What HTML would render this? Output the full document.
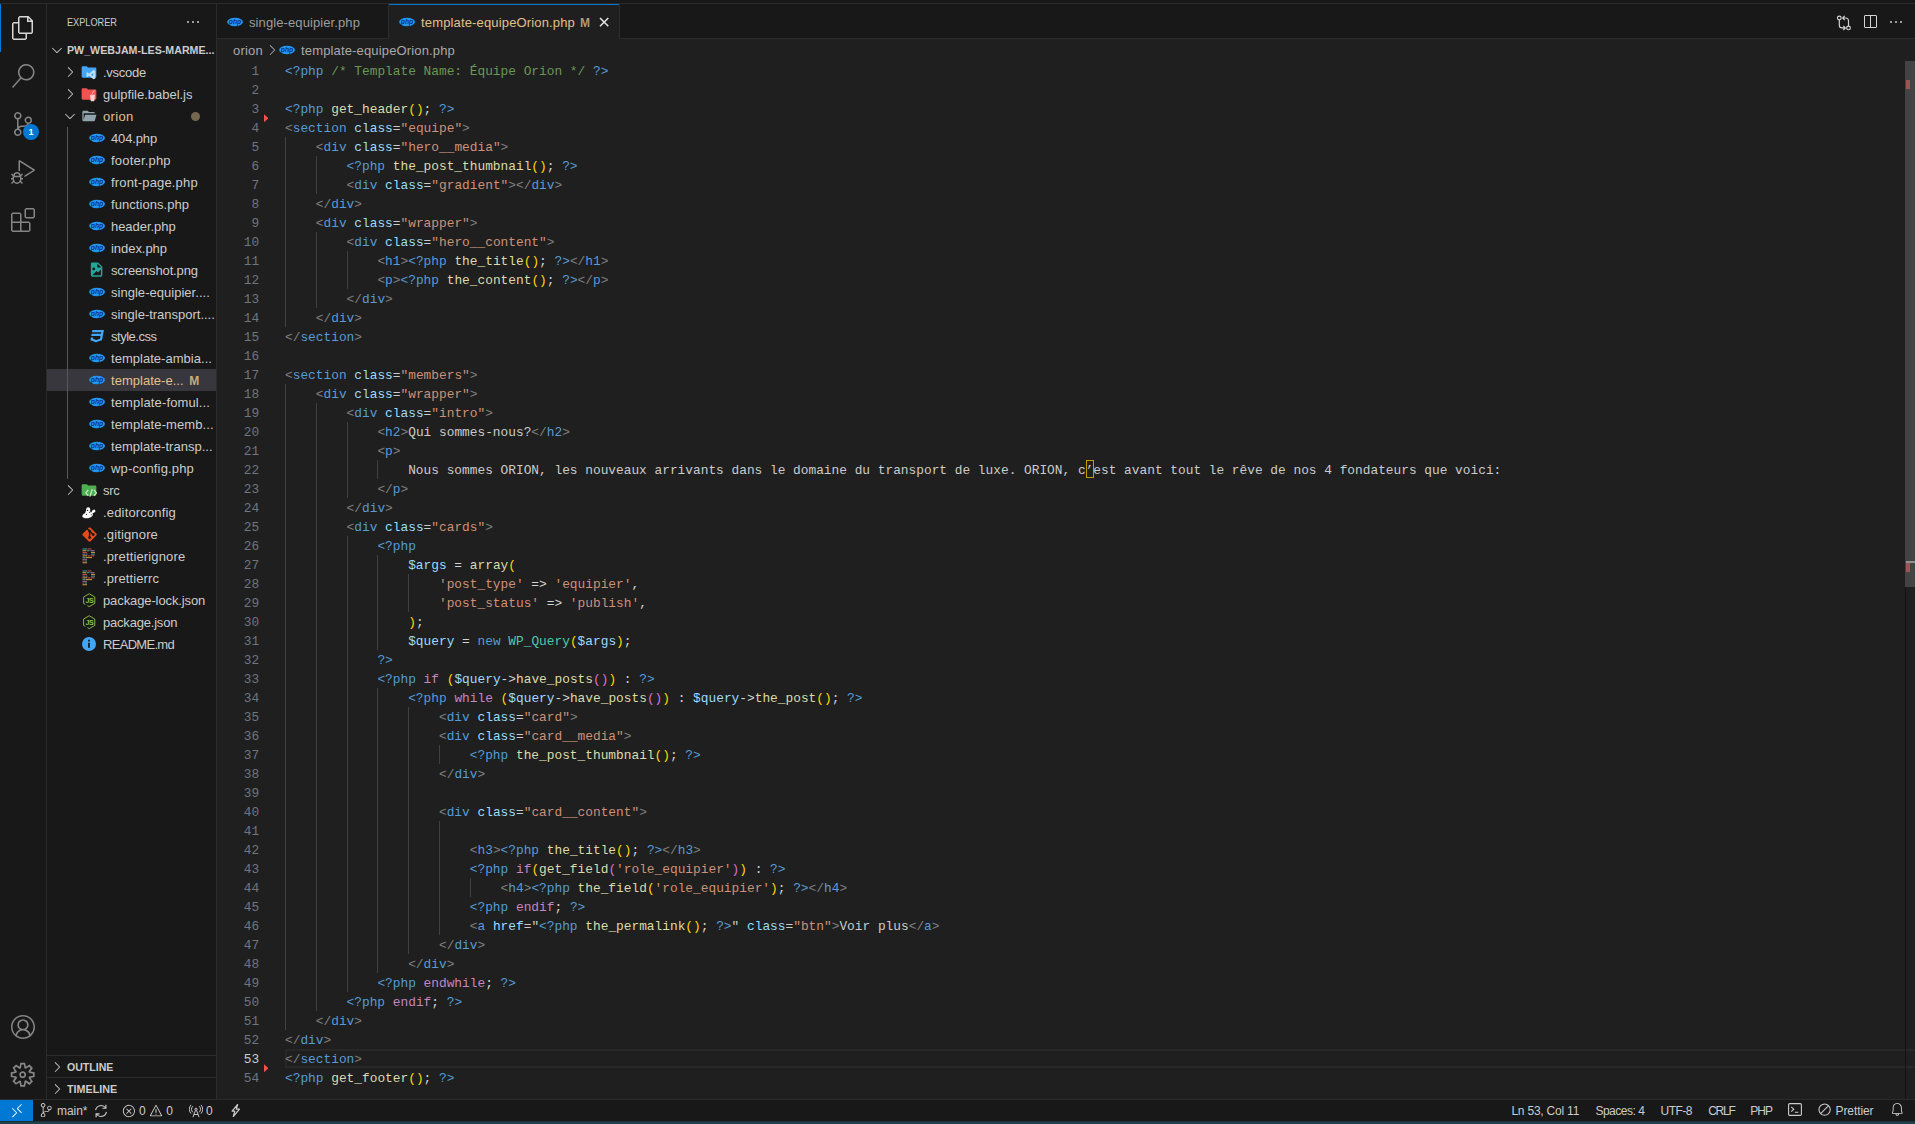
<!DOCTYPE html>
<html lang="fr"><head><meta charset="utf-8"><title>template-equipeOrion.php - Visual Studio Code</title><style>
html,body{margin:0;padding:0;background:#181818;}
body{width:1915px;height:1124px;overflow:hidden;position:relative;font-family:"Liberation Sans", sans-serif;}
#r{position:absolute;left:0;top:0;width:1915px;height:1124px;overflow:hidden;}
#r>div,#r>span,#r>svg{position:absolute;}
.tx{white-space:pre;}
.ln{left:217px;width:42.100px;text-align:right;height:19px;line-height:19px;font-family:"Liberation Mono", monospace;font-size:12.843px;margin-top:1px;}
.cl{height:19px;line-height:19px;white-space:pre;font-family:"Liberation Mono", monospace;font-size:12.843px;margin-top:1px;}
</style></head><body><div id="r">
<div style="left:0px;top:0px;width:1915px;height:1124px;background:#181818;"></div>
<div style="left:0px;top:3px;width:1915px;height:1px;background:#2b2b2b;"></div>
<div style="left:217px;top:39px;width:1698px;height:1060px;background:#1f1f1f;"></div>
<div style="left:46px;top:4px;width:1px;height:1095px;background:#2b2b2b;"></div>
<div style="left:216px;top:4px;width:1px;height:1095px;background:#2b2b2b;"></div>
<div style="left:217px;top:38px;width:1698px;height:1px;background:#2b2b2b;"></div>
<div style="left:388px;top:4px;width:1px;height:34px;background:#2b2b2b;"></div>
<div style="left:389px;top:4px;width:230px;height:35px;background:#1f1f1f;"></div>
<div style="left:389px;top:4px;width:230px;height:1px;background:#0078d4;"></div>
<div style="left:619px;top:4px;width:1px;height:34px;background:#2b2b2b;"></div>
<div style="left:0px;top:1099px;width:1915px;height:1px;background:#2b2b2b;"></div>
<div style="left:0px;top:1100px;width:33px;height:21px;background:#0078d4;"></div>
<div style="left:0px;top:1121px;width:1915px;height:3px;background:#1e414c;"></div>
<div style="left:0px;top:1121px;width:1915px;height:1px;background:#1b3038;"></div>
<div style="left:0px;top:4px;width:1px;height:48px;background:#0078d4;"></div>
<svg style="left:11px;top:16px;" width="24" height="24" viewBox="0 0 24 24"><path fill="#d7d7d7" fill-rule="evenodd" clip-rule="evenodd" d="M17.5 0h-9L7 1.5V6H2.5L1 7.5v15.07L2.5 24h12.07L16 22.57V18h4.7l1.3-1.43V4.5L17.5 0zm0 2.12l2.38 2.38H17.5V2.12zm-3 20.38h-12v-15H7v9.07L8.5 18h6v4.5zm6-6h-12v-15H16V6h4.5v10.5z"/></svg>
<svg style="left:11px;top:64px;" width="24" height="24" viewBox="0 0 24 24"><path fill="#868686" fill-rule="evenodd" clip-rule="evenodd" d="M15.25 0a8.25 8.25 0 0 0-6.18 13.72L1 22.88l1.12 1 8.05-9.12A8.251 8.251 0 1 0 15.25.01V0zm0 15a6.75 6.75 0 1 1 0-13.5 6.75 6.75 0 0 1 0 13.5z"/></svg>
<svg style="left:11px;top:112px;" width="24" height="24" viewBox="0 0 24 24"><path fill="#868686" fill-rule="evenodd" clip-rule="evenodd" d="M21.007 8.222A3.738 3.738 0 0 0 15.045 5.2a3.737 3.737 0 0 0 1.156 6.583 2.988 2.988 0 0 1-2.668 1.67h-2.99a4.456 4.456 0 0 0-2.989 1.165V7.4a3.737 3.737 0 1 0-1.494 0v9.117a3.776 3.776 0 1 0 1.816.099 2.99 2.99 0 0 1 2.668-1.667h2.99a4.484 4.484 0 0 0 4.223-3.039 3.736 3.736 0 0 0 3.25-3.687zM4.565 3.738a2.242 2.242 0 1 1 4.484 0 2.242 2.242 0 0 1-4.484 0zm4.484 16.441a2.242 2.242 0 1 1-4.484 0 2.242 2.242 0 0 1 4.484 0zm8.221-9.715a2.242 2.242 0 1 1 0-4.485 2.242 2.242 0 0 1 0 4.485z"/></svg>
<svg style="left:11px;top:160px;" width="24" height="24" viewBox="0 0 24 24"><path fill="#868686" fill-rule="evenodd" clip-rule="evenodd" d="M10.94 13.5l-1.32 1.32a3.73 3.73 0 0 0-7.24 0L1.06 13.5 0 14.56l1.72 1.72-.22.22V18H0v1.5h1.5v.08c.077.489.214.966.41 1.42L0 22.94 1.06 24l1.65-1.65A4.308 4.308 0 0 0 6 24a4.31 4.31 0 0 0 3.29-1.65L10.94 24 12 22.94 10.09 21c.198-.464.336-.951.41-1.45v-.1H12V18h-1.5v-1.5l-.22-.22L12 14.56l-1.06-1.06zM6 13.5a2.25 2.25 0 0 1 2.25 2.25h-4.5A2.25 2.25 0 0 1 6 13.5zm3 6a3.33 3.33 0 0 1-3 3 3.33 3.33 0 0 1-3-3v-2.25h6v2.25zm14.76-9.9v1.26L13.5 17.37V15.6l8.5-5.37L9 2v9.46a5.07 5.07 0 0 0-1.5-.72V.63L8.64 0l15.12 9.6z"/></svg>
<svg style="left:11px;top:208px;" width="24" height="24" viewBox="0 0 24 24"><path fill="#868686" fill-rule="evenodd" clip-rule="evenodd" d="M13.5 1.5L15 0h7.5L24 1.5V9l-1.5 1.5H15L13.5 9V1.5zm1.5 0V9h7.5V1.5H15zM0 15V6l1.5-1.5H9L10.5 6v7.5H18l1.5 1.5v7.5L18 24H1.5L0 22.5V15zm9-1.5V6H1.5v7.5H9zM9 15H1.5v7.5H9V15zm1.5 7.5H18V15h-7.5v7.5z"/></svg>
<div style="left:23px;top:124px;width:16px;height:16px;border-radius:8px;background:#0078d4"></div>
<span id="t0" class="tx" style="left:28.5px;top:124.0px;font-size:9px;line-height:16px;color:#ffffff;font-weight:700;">1</span>
<svg style="left:11px;top:1015px;" width="24" height="24" viewBox="0 0 16 16"><path fill="#868686" fill-rule="evenodd" clip-rule="evenodd" d="M16 7.992C16 3.58 12.416 0 8 0S0 3.58 0 7.992c0 2.43 1.104 4.62 2.832 6.09.016.016.032.016.032.032.144.112.288.224.448.336.08.048.144.111.224.175A7.98 7.98 0 0 0 8.016 16a7.98 7.98 0 0 0 4.48-1.375c.08-.048.144-.111.224-.16.144-.111.304-.223.448-.335.016-.016.032-.016.032-.032 1.696-1.487 2.8-3.676 2.8-6.106zm-8 7.001c-1.504 0-2.88-.48-4.016-1.279.016-.128.048-.255.08-.383a4.17 4.17 0 0 1 .416-.991c.176-.304.384-.576.64-.816.24-.24.528-.463.816-.639.304-.176.624-.304.976-.4A4.15 4.15 0 0 1 8 10.342a4.185 4.185 0 0 1 2.928 1.166c.368.368.656.8.864 1.295.112.288.192.592.24.911A7.03 7.03 0 0 1 8 14.993zm-2.448-7.4a2.49 2.49 0 0 1-.208-1.024c0-.351.064-.703.208-1.023.144-.32.336-.607.576-.847.24-.24.528-.431.848-.575.32-.144.672-.208 1.024-.208.368 0 .704.064 1.024.208.32.144.608.336.848.575.24.24.432.528.576.847.144.32.208.672.208 1.023 0 .368-.064.704-.208 1.023a2.84 2.84 0 0 1-.576.848 2.84 2.84 0 0 1-.848.575 2.715 2.715 0 0 1-2.064 0 2.84 2.84 0 0 1-.848-.575 2.526 2.526 0 0 1-.56-.848zm7.424 5.306c0-.032-.016-.048-.016-.08a5.22 5.22 0 0 0-.688-1.406 4.883 4.883 0 0 0-1.088-1.135 5.207 5.207 0 0 0-1.04-.608 2.82 2.82 0 0 0 .464-.383 4.2 4.2 0 0 0 .624-.784 3.624 3.624 0 0 0 .528-1.934 3.71 3.71 0 0 0-.288-1.47 3.799 3.799 0 0 0-.816-1.199 3.845 3.845 0 0 0-1.2-.8 3.72 3.72 0 0 0-1.472-.287 3.72 3.72 0 0 0-1.472.288 3.631 3.631 0 0 0-1.2.815 3.84 3.84 0 0 0-.8 1.199 3.71 3.71 0 0 0-.288 1.47c0 .352.048.688.144 1.007.096.336.224.64.4.927.16.288.384.544.624.784.144.144.304.271.48.383a5.12 5.12 0 0 0-1.04.624c-.416.32-.784.703-1.088 1.119a4.999 4.999 0 0 0-.688 1.406c-.16.032-.16.064-.16.08C1.776 11.636.992 9.91.992 7.992.992 4.14 4.144.991 8 .991s7.008 3.149 7.008 7.001a6.96 6.96 0 0 1-2.032 4.907z"/></svg>
<svg style="left:9.3px;top:1061.3px;" width="27.4" height="27.4" viewBox="0 0 16 16"><path fill="#868686" fill-rule="evenodd" clip-rule="evenodd" d="M9.1 4.4L8.6 2H7.4l-.5 2.4-.7.3-2-1.3-.9.8 1.3 2-.2.7-2.4.5v1.2l2.4.5.3.8-1.3 2 .8.8 2-1.3.8.3.4 2.3h1.2l.5-2.4.8-.3 2 1.3.8-.8-1.3-2 .3-.8 2.3-.4V7.4l-2.4-.5-.3-.8 1.3-2-.8-.8-2 1.3-.7-.2zM9.4 1l.5 2.4L12 2.1l2 2-1.4 2.1 2.4.4v2.8l-2.4.5L14 12l-2 2-2.1-1.4-.5 2.4H6.6l-.5-2.4L4 13.9l-2-2 1.4-2.1L1 9.4V6.6l2.4-.5L2.1 4l2-2 2.1 1.4.4-2.4h2.8zm.6 7c0 1.1-.9 2-2 2s-2-.9-2-2 .9-2 2-2 2 .9 2 2zM8 9c.6 0 1-.4 1-1s-.4-1-1-1-1 .4-1 1 .4 1 1 1z"/></svg>
<span id="t1" class="tx" style="left:67px;top:11.0px;font-size:11px;line-height:22px;color:#cccccc;font-weight:400;transform:scaleX(0.8344);transform-origin:0 50%;">EXPLORER</span>
<svg style="left:185px;top:14px;" width="16" height="16" viewBox="0 0 16 16"><path fill="#cccccc" fill-rule="evenodd" clip-rule="evenodd" d="M4 8a1 1 0 1 1-2 0 1 1 0 0 1 2 0zm5 0a1 1 0 1 1-2 0 1 1 0 0 1 2 0zm5 0a1 1 0 1 1-2 0 1 1 0 0 1 2 0z"/></svg>
<svg style="left:49px;top:42px;" width="16" height="16" viewBox="0 0 16 16"><path fill="#cccccc" fill-rule="evenodd" clip-rule="evenodd" d="M7.976 10.072l4.357-4.357.62.618L8.284 11h-.618L3 6.333l.619-.618 4.357 4.357z"/></svg>
<span id="t2" class="tx" style="left:67px;top:39.0px;font-size:11px;line-height:22px;color:#cccccc;font-weight:700;transform:scaleX(0.9693);transform-origin:0 50%;">PW_WEBJAM-LES-MARME...</span>
<div style="left:47px;top:369px;width:169px;height:22px;background:#37373d;"></div>
<div style="left:67px;top:127px;width:1px;height:352px;background:#585858;"></div>
<svg style="left:62px;top:64px;" width="16" height="16" viewBox="0 0 16 16"><path fill="#cccccc" fill-rule="evenodd" clip-rule="evenodd" d="M10.072 8.024L5.715 3.667l.618-.62L11 7.716v.618L6.333 13l-.618-.619 4.357-4.357z"/></svg>
<svg style="left:81px;top:64px;" width="16" height="16" viewBox="0 0 24 24"><path fill="#42a5f5" d="M10.200 4.700l-1-.8a1.600 1.600 0 0 0-1-.4H2.600A1.600 1.600 0 0 0 1 5.100v13.800a1.600 1.600 0 0 0 1.600 1.600h18.800a1.600 1.600 0 0 0 1.600-1.600V6.700a1.600 1.600 0 0 0-1.600-1.600h-10.200a1.600 1.600 0 0 1-1-.4z"/><path fill="#bbdefb" d="M21.5 10.2v11.6l-3 1.2-6.3-5.6-2.7 2.1-1.2-.7v-5.600l1.2-.7 2.700 2.100 6.300-5.600 3 1.200zm-3.200 3.300l-3.600 2.500 3.600 2.500v-5z"/></svg>
<span id="t3" class="tx" style="left:103px;top:62.0px;font-size:13px;line-height:22px;color:#cccccc;font-weight:400;letter-spacing:-0.259px;">.vscode</span>
<svg style="left:62px;top:86px;" width="16" height="16" viewBox="0 0 16 16"><path fill="#cccccc" fill-rule="evenodd" clip-rule="evenodd" d="M10.072 8.024L5.715 3.667l.618-.62L11 7.716v.618L6.333 13l-.618-.619 4.357-4.357z"/></svg>
<svg style="left:81px;top:86px;" width="16" height="16" viewBox="0 0 24 24"><path fill="#ef5350" d="M10.200 4.700l-1-.8a1.600 1.600 0 0 0-1-.4H2.600A1.600 1.600 0 0 0 1 5.100v13.800a1.600 1.600 0 0 0 1.600 1.600h18.800a1.600 1.600 0 0 0 1.600-1.600V6.700a1.600 1.600 0 0 0-1.600-1.600h-10.200a1.600 1.600 0 0 1-1-.4z"/><path fill="#ffcdd2" d="M13.500 13h7.500l-.8 8.500c-.1.900-.8 1.500-1.700 1.500h-2.500c-.900 0-1.600-.6-1.700-1.500L13.500 13zm3.200-1l1.300-4.500 2.500-.8.300 1-2 .6-1 3.700h-1.100z"/></svg>
<span id="t4" class="tx" style="left:103px;top:84.0px;font-size:13px;line-height:22px;color:#cccccc;font-weight:400;letter-spacing:-0.007px;">gulpfile.babel.js</span>
<svg style="left:62px;top:108px;" width="16" height="16" viewBox="0 0 16 16"><path fill="#cccccc" fill-rule="evenodd" clip-rule="evenodd" d="M7.976 10.072l4.357-4.357.62.618L8.284 11h-.618L3 6.333l.619-.618 4.357 4.357z"/></svg>
<svg style="left:81px;top:108px;" width="16" height="16" viewBox="0 0 24 24"><path fill="#90a4ae" d="M19 20H4a2 2 0 0 1-2-2V6c0-1.11.89-2 2-2h6l2 2h7a2 2 0 0 1 2 2H4v10l2.14-8h17.07l-2.28 8.5c-.23.87-1.01 1.5-1.93 1.5z"/></svg>
<span id="t5" class="tx" style="left:103px;top:106.0px;font-size:13px;line-height:22px;color:#e2c08d;font-weight:400;letter-spacing:0.316px;">orion</span>
<div style="left:190.5px;top:111.5px;width:9px;height:9px;border-radius:5px;background:#75664f"></div>
<svg style="left:88.6px;top:130px;" width="17" height="16" viewBox="0 0 17 16"><ellipse cx="8.05" cy="8" rx="7.9" ry="4.2" fill="#2196f3"/><text x="8" y="9.700" text-anchor="middle" font-family="Liberation Sans, sans-serif" font-size="6.8" font-weight="700" font-style="italic" fill="#04101c" fill-opacity=".72">php</text></svg>
<span id="t6" class="tx" style="left:111px;top:128.0px;font-size:13px;line-height:22px;color:#cccccc;font-weight:400;letter-spacing:-0.143px;">404.php</span>
<svg style="left:88.6px;top:152px;" width="17" height="16" viewBox="0 0 17 16"><ellipse cx="8.05" cy="8" rx="7.9" ry="4.2" fill="#2196f3"/><text x="8" y="9.700" text-anchor="middle" font-family="Liberation Sans, sans-serif" font-size="6.8" font-weight="700" font-style="italic" fill="#04101c" fill-opacity=".72">php</text></svg>
<span id="t7" class="tx" style="left:111px;top:150.0px;font-size:13px;line-height:22px;color:#cccccc;font-weight:400;letter-spacing:0.196px;">footer.php</span>
<svg style="left:88.6px;top:174px;" width="17" height="16" viewBox="0 0 17 16"><ellipse cx="8.05" cy="8" rx="7.9" ry="4.2" fill="#2196f3"/><text x="8" y="9.700" text-anchor="middle" font-family="Liberation Sans, sans-serif" font-size="6.8" font-weight="700" font-style="italic" fill="#04101c" fill-opacity=".72">php</text></svg>
<span id="t8" class="tx" style="left:111px;top:172.0px;font-size:13px;line-height:22px;color:#cccccc;font-weight:400;letter-spacing:0.159px;">front-page.php</span>
<svg style="left:88.6px;top:196px;" width="17" height="16" viewBox="0 0 17 16"><ellipse cx="8.05" cy="8" rx="7.9" ry="4.2" fill="#2196f3"/><text x="8" y="9.700" text-anchor="middle" font-family="Liberation Sans, sans-serif" font-size="6.8" font-weight="700" font-style="italic" fill="#04101c" fill-opacity=".72">php</text></svg>
<span id="t9" class="tx" style="left:111px;top:194.0px;font-size:13px;line-height:22px;color:#cccccc;font-weight:400;letter-spacing:0.051px;">functions.php</span>
<svg style="left:88.6px;top:218px;" width="17" height="16" viewBox="0 0 17 16"><ellipse cx="8.05" cy="8" rx="7.9" ry="4.2" fill="#2196f3"/><text x="8" y="9.700" text-anchor="middle" font-family="Liberation Sans, sans-serif" font-size="6.8" font-weight="700" font-style="italic" fill="#04101c" fill-opacity=".72">php</text></svg>
<span id="t10" class="tx" style="left:111px;top:216.0px;font-size:13px;line-height:22px;color:#cccccc;font-weight:400;letter-spacing:-0.046px;">header.php</span>
<svg style="left:88.6px;top:240px;" width="17" height="16" viewBox="0 0 17 16"><ellipse cx="8.05" cy="8" rx="7.9" ry="4.2" fill="#2196f3"/><text x="8" y="9.700" text-anchor="middle" font-family="Liberation Sans, sans-serif" font-size="6.8" font-weight="700" font-style="italic" fill="#04101c" fill-opacity=".72">php</text></svg>
<span id="t11" class="tx" style="left:111px;top:238.0px;font-size:13px;line-height:22px;color:#cccccc;font-weight:400;letter-spacing:-0.043px;">index.php</span>
<svg style="left:88px;top:261.1px;" width="17.2" height="17.2" viewBox="0 0 24 24"><path fill="#26a69a" fill-rule="evenodd" d="M13 9h5.500L13 3.500V9M6 2h8l6 6v12a2 2 0 0 1-2 2H6a2 2 0 0 1-2-2V4c0-1.110.890-2 2-2m0 18h12v-8l-4 4-2-2-6 6M8 9a2 2 0 0 0-2 2 2 2 0 0 0 2 2 2 2 0 0 0 2-2 2 2 0 0 0-2-2z"/></svg>
<span id="t12" class="tx" style="left:111px;top:260.0px;font-size:13px;line-height:22px;color:#cccccc;font-weight:400;letter-spacing:-0.150px;">screenshot.png</span>
<svg style="left:88.6px;top:284px;" width="17" height="16" viewBox="0 0 17 16"><ellipse cx="8.05" cy="8" rx="7.9" ry="4.2" fill="#2196f3"/><text x="8" y="9.700" text-anchor="middle" font-family="Liberation Sans, sans-serif" font-size="6.8" font-weight="700" font-style="italic" fill="#04101c" fill-opacity=".72">php</text></svg>
<span id="t13" class="tx" style="left:111px;top:282.0px;font-size:13px;line-height:22px;color:#cccccc;font-weight:400;letter-spacing:0.027px;">single-equipier....</span>
<svg style="left:88.6px;top:306px;" width="17" height="16" viewBox="0 0 17 16"><ellipse cx="8.05" cy="8" rx="7.9" ry="4.2" fill="#2196f3"/><text x="8" y="9.700" text-anchor="middle" font-family="Liberation Sans, sans-serif" font-size="6.8" font-weight="700" font-style="italic" fill="#04101c" fill-opacity=".72">php</text></svg>
<span id="t14" class="tx" style="left:111px;top:304.0px;font-size:13px;line-height:22px;color:#cccccc;font-weight:400;letter-spacing:-0.013px;">single-transport....</span>
<svg style="left:89.2px;top:328px;" width="16.4" height="16.4" viewBox="0 0 24 24"><path fill="#42a5f5" d="M5 3l-.650 3.340h13.590L17.500 8.500H3.920l-.660 3.330h13.590l-.760 3.810-5.480 1.810-4.750-1.810.330-1.640H2.850l-.790 4 7.850 3 9.050-3 1.200-6.030.240-1.210L21.940 3H5z"/></svg>
<span id="t15" class="tx" style="left:111px;top:326.0px;font-size:13px;line-height:22px;color:#cccccc;font-weight:400;letter-spacing:-0.473px;">style.css</span>
<svg style="left:88.6px;top:350px;" width="17" height="16" viewBox="0 0 17 16"><ellipse cx="8.05" cy="8" rx="7.9" ry="4.2" fill="#2196f3"/><text x="8" y="9.700" text-anchor="middle" font-family="Liberation Sans, sans-serif" font-size="6.8" font-weight="700" font-style="italic" fill="#04101c" fill-opacity=".72">php</text></svg>
<span id="t16" class="tx" style="left:111px;top:348.0px;font-size:13px;line-height:22px;color:#cccccc;font-weight:400;letter-spacing:0.033px;">template-ambia...</span>
<svg style="left:88.6px;top:372px;" width="17" height="16" viewBox="0 0 17 16"><ellipse cx="8.05" cy="8" rx="7.9" ry="4.2" fill="#2196f3"/><text x="8" y="9.700" text-anchor="middle" font-family="Liberation Sans, sans-serif" font-size="6.8" font-weight="700" font-style="italic" fill="#04101c" fill-opacity=".72">php</text></svg>
<span id="t17" class="tx" style="left:111px;top:370.0px;font-size:13px;line-height:22px;color:#e2c08d;font-weight:400;letter-spacing:0.026px;">template-e...</span>
<span id="t18" class="tx" style="left:189.3px;top:370.0px;font-size:12px;line-height:22px;color:#c8ab7e;font-weight:700;letter-spacing:0.690px;">M</span>
<svg style="left:88.6px;top:394px;" width="17" height="16" viewBox="0 0 17 16"><ellipse cx="8.05" cy="8" rx="7.9" ry="4.2" fill="#2196f3"/><text x="8" y="9.700" text-anchor="middle" font-family="Liberation Sans, sans-serif" font-size="6.8" font-weight="700" font-style="italic" fill="#04101c" fill-opacity=".72">php</text></svg>
<span id="t19" class="tx" style="left:111px;top:392.0px;font-size:13px;line-height:22px;color:#cccccc;font-weight:400;letter-spacing:0.134px;">template-fomul...</span>
<svg style="left:88.6px;top:416px;" width="17" height="16" viewBox="0 0 17 16"><ellipse cx="8.05" cy="8" rx="7.9" ry="4.2" fill="#2196f3"/><text x="8" y="9.700" text-anchor="middle" font-family="Liberation Sans, sans-serif" font-size="6.8" font-weight="700" font-style="italic" fill="#04101c" fill-opacity=".72">php</text></svg>
<span id="t20" class="tx" style="left:111px;top:414.0px;font-size:13px;line-height:22px;color:#cccccc;font-weight:400;letter-spacing:0.097px;">template-memb...</span>
<svg style="left:88.6px;top:438px;" width="17" height="16" viewBox="0 0 17 16"><ellipse cx="8.05" cy="8" rx="7.9" ry="4.2" fill="#2196f3"/><text x="8" y="9.700" text-anchor="middle" font-family="Liberation Sans, sans-serif" font-size="6.8" font-weight="700" font-style="italic" fill="#04101c" fill-opacity=".72">php</text></svg>
<span id="t21" class="tx" style="left:111px;top:436.0px;font-size:13px;line-height:22px;color:#cccccc;font-weight:400;letter-spacing:0.024px;">template-transp...</span>
<svg style="left:88.6px;top:460px;" width="17" height="16" viewBox="0 0 17 16"><ellipse cx="8.05" cy="8" rx="7.9" ry="4.2" fill="#2196f3"/><text x="8" y="9.700" text-anchor="middle" font-family="Liberation Sans, sans-serif" font-size="6.8" font-weight="700" font-style="italic" fill="#04101c" fill-opacity=".72">php</text></svg>
<span id="t22" class="tx" style="left:111px;top:458.0px;font-size:13px;line-height:22px;color:#cccccc;font-weight:400;letter-spacing:0.158px;">wp-config.php</span>
<svg style="left:62px;top:482px;" width="16" height="16" viewBox="0 0 16 16"><path fill="#cccccc" fill-rule="evenodd" clip-rule="evenodd" d="M10.072 8.024L5.715 3.667l.618-.62L11 7.716v.618L6.333 13l-.618-.619 4.357-4.357z"/></svg>
<svg style="left:81px;top:482px;" width="16" height="16" viewBox="0 0 24 24"><path fill="#4caf50" d="M10.200 4.700l-1-.8a1.600 1.600 0 0 0-1-.4H2.600A1.600 1.600 0 0 0 1 5.100v13.800a1.600 1.600 0 0 0 1.600 1.600h18.800a1.600 1.600 0 0 0 1.600-1.600V6.700a1.600 1.600 0 0 0-1.600-1.600h-10.200a1.600 1.600 0 0 1-1-.4z"/><path fill="none" stroke="#c8e6c9" stroke-width="1.900" d="M11 11.800l-3.800 4.400 3.800 4.400M19.400 11.800l3.800 4.400-3.800 4.400M17 10.600l-3.600 11.400"/></svg>
<span id="t23" class="tx" style="left:103px;top:480.0px;font-size:13px;line-height:22px;color:#cccccc;font-weight:400;letter-spacing:-0.344px;">src</span>
<svg style="left:81px;top:504px;" width="16" height="16" viewBox="0 0 16 16"><g fill="#fafafa"><ellipse cx="6.600" cy="11.300" rx="5.400" ry="2.900" transform="rotate(-12 6.600 11.300)"/><circle cx="7.200" cy="5.300" r="2"/><path d="M5.400 5.500l-1.600 4.500 5.800 1 -.600-5.600z"/><ellipse cx="12.600" cy="7.200" rx="1.900" ry="1.400" transform="rotate(-25 12.600 7.200)"/><path d="M9 9.600l3-2.800 1 1.400-3 2.600z"/></g><g fill="#181818"><circle cx="6.600" cy="6.400" r=".6"/><circle cx="8.400" cy="8.300" r=".55"/><circle cx="5.400" cy="10.400" r=".55"/><circle cx="10.300" cy="10.800" r=".5"/></g></svg>
<span id="t24" class="tx" style="left:103px;top:502.0px;font-size:13px;line-height:22px;color:#cccccc;font-weight:400;letter-spacing:0.167px;">.editorconfig</span>
<svg style="left:80.8px;top:525.7px;" width="17.2" height="17.2" viewBox="0 0 24 24"><path fill="#e64a19" d="M2.600 10.590L8.380 4.800l1.690 1.700c-.240.850.150 1.780.930 2.230v5.540c-.600.340-1 .990-1 1.730a2 2 0 0 0 2 2 2 2 0 0 0 2-2c0-.740-.400-1.390-1-1.730V9.410l2.070 2.090c-.070.150-.070.320-.070.500a2 2 0 0 0 2 2 2 2 0 0 0 2-2 2 2 0 0 0-2-2c-.180 0-.350 0-.500.070L13.930 7.500a1.980 1.980 0 0 0-1.150-2.340c-.430-.160-.880-.200-1.280-.090L9.800 3.380l.790-.780c.780-.790 2.040-.790 2.820 0l7.990 7.990c.790.780.790 2.040 0 2.820l-7.990 7.990c-.780.790-2.040.790-2.820 0L2.600 13.410c-.790-.780-.790-2.040 0-2.820z"/></svg>
<span id="t25" class="tx" style="left:103px;top:524.0px;font-size:13px;line-height:22px;color:#cccccc;font-weight:400;letter-spacing:0.152px;">.gitignore</span>
<svg style="left:81px;top:548px;" width="16" height="16" viewBox="0 0 16 16"><rect x="1.5" y="0.45" width="5" height="1.050" fill="#56b3b4" fill-opacity=".8"/><rect x="7" y="0.45" width="3.5" height="1.050" fill="#ea5e5e" fill-opacity=".8"/><rect x="1.5" y="2.17" width="3.5" height="1.050" fill="#f7ba3e" fill-opacity=".8"/><rect x="5.5" y="2.17" width="3" height="1.050" fill="#56b3b4" fill-opacity=".8"/><rect x="9.5" y="2.17" width="4" height="1.050" fill="#bf85bf" fill-opacity=".8"/><rect x="1.5" y="3.89" width="4.5" height="1.050" fill="#ea5e5e" fill-opacity=".8"/><rect x="10" y="3.89" width="4" height="1.050" fill="#f7ba3e" fill-opacity=".8"/><rect x="1.5" y="5.61" width="3" height="1.050" fill="#bf85bf" fill-opacity=".8"/><rect x="5" y="5.61" width="1.5" height="1.050" fill="#56b3b4" fill-opacity=".8"/><rect x="10" y="5.61" width="4" height="1.050" fill="#56b3b4" fill-opacity=".8"/><rect x="1.5" y="7.33" width="4.5" height="1.050" fill="#f7ba3e" fill-opacity=".8"/><rect x="6.5" y="7.33" width="3" height="1.050" fill="#ea5e5e" fill-opacity=".8"/><rect x="10" y="7.33" width="3.5" height="1.050" fill="#ea5e5e" fill-opacity=".8"/><rect x="1.5" y="9.05" width="3" height="1.050" fill="#56b3b4" fill-opacity=".8"/><rect x="5" y="9.05" width="6" height="1.050" fill="#f7ba3e" fill-opacity=".8"/><rect x="1.5" y="10.77" width="4.5" height="1.050" fill="#bf85bf" fill-opacity=".8"/><rect x="1.5" y="12.49" width="2" height="1.050" fill="#ea5e5e" fill-opacity=".8"/><rect x="4" y="12.49" width="2" height="1.050" fill="#56b3b4" fill-opacity=".8"/><rect x="1.5" y="14.21" width="4.5" height="1.050" fill="#f7ba3e" fill-opacity=".8"/></svg>
<span id="t26" class="tx" style="left:103px;top:546.0px;font-size:13px;line-height:22px;color:#cccccc;font-weight:400;letter-spacing:0.139px;">.prettierignore</span>
<svg style="left:81px;top:570px;" width="16" height="16" viewBox="0 0 16 16"><rect x="1.5" y="0.45" width="5" height="1.050" fill="#56b3b4" fill-opacity=".8"/><rect x="7" y="0.45" width="3.5" height="1.050" fill="#ea5e5e" fill-opacity=".8"/><rect x="1.5" y="2.17" width="3.5" height="1.050" fill="#f7ba3e" fill-opacity=".8"/><rect x="5.5" y="2.17" width="3" height="1.050" fill="#56b3b4" fill-opacity=".8"/><rect x="9.5" y="2.17" width="4" height="1.050" fill="#bf85bf" fill-opacity=".8"/><rect x="1.5" y="3.89" width="4.5" height="1.050" fill="#ea5e5e" fill-opacity=".8"/><rect x="10" y="3.89" width="4" height="1.050" fill="#f7ba3e" fill-opacity=".8"/><rect x="1.5" y="5.61" width="3" height="1.050" fill="#bf85bf" fill-opacity=".8"/><rect x="5" y="5.61" width="1.5" height="1.050" fill="#56b3b4" fill-opacity=".8"/><rect x="10" y="5.61" width="4" height="1.050" fill="#56b3b4" fill-opacity=".8"/><rect x="1.5" y="7.33" width="4.5" height="1.050" fill="#f7ba3e" fill-opacity=".8"/><rect x="6.5" y="7.33" width="3" height="1.050" fill="#ea5e5e" fill-opacity=".8"/><rect x="10" y="7.33" width="3.5" height="1.050" fill="#ea5e5e" fill-opacity=".8"/><rect x="1.5" y="9.05" width="3" height="1.050" fill="#56b3b4" fill-opacity=".8"/><rect x="5" y="9.05" width="6" height="1.050" fill="#f7ba3e" fill-opacity=".8"/><rect x="1.5" y="10.77" width="4.5" height="1.050" fill="#bf85bf" fill-opacity=".8"/><rect x="1.5" y="12.49" width="2" height="1.050" fill="#ea5e5e" fill-opacity=".8"/><rect x="4" y="12.49" width="2" height="1.050" fill="#56b3b4" fill-opacity=".8"/><rect x="1.5" y="14.21" width="4.5" height="1.050" fill="#f7ba3e" fill-opacity=".8"/></svg>
<span id="t27" class="tx" style="left:103px;top:568.0px;font-size:13px;line-height:22px;color:#cccccc;font-weight:400;letter-spacing:0.099px;">.prettierrc</span>
<svg style="left:80.6px;top:591.8px;" width="16.4" height="16.4" viewBox="0 0 24 24"><path fill="none" stroke="#8bc34a" stroke-width="1.350" stroke-linejoin="round" d="M12 2.600l8.200 4.700v9.400L12 21.400l-2.600-1.500M12 2.600L3.800 7.300v9.400l2.600 1.500"/><text x="12.300" y="16.200" text-anchor="middle" font-family="Liberation Sans, sans-serif" font-size="10.500" font-weight="700" fill="#8bc34a" letter-spacing="-.6">JS</text></svg>
<span id="t28" class="tx" style="left:103px;top:590.0px;font-size:13px;line-height:22px;color:#cccccc;font-weight:400;letter-spacing:-0.109px;">package-lock.json</span>
<svg style="left:80.6px;top:613.8px;" width="16.4" height="16.4" viewBox="0 0 24 24"><path fill="none" stroke="#8bc34a" stroke-width="1.350" stroke-linejoin="round" d="M12 2.600l8.200 4.700v9.400L12 21.400l-2.600-1.500M12 2.600L3.800 7.300v9.400l2.600 1.500"/><text x="12.300" y="16.200" text-anchor="middle" font-family="Liberation Sans, sans-serif" font-size="10.500" font-weight="700" fill="#8bc34a" letter-spacing="-.6">JS</text></svg>
<span id="t29" class="tx" style="left:103px;top:612.0px;font-size:13px;line-height:22px;color:#cccccc;font-weight:400;letter-spacing:-0.201px;">package.json</span>
<svg style="left:81px;top:636px;" width="16" height="16" viewBox="0 0 16 16"><circle cx="8" cy="8" r="7" fill="#42a5f5"/><rect x="7.100" y="6.800" width="1.800" height="5" fill="#181818"/><rect x="7.100" y="3.700" width="1.800" height="1.800" fill="#181818"/></svg>
<span id="t30" class="tx" style="left:103px;top:634.0px;font-size:13px;line-height:22px;color:#cccccc;font-weight:400;letter-spacing:-0.700px;">README.md</span>
<div style="left:47px;top:1055px;width:169px;height:1px;background:#2b2b2b;"></div>
<div style="left:47px;top:1077px;width:169px;height:1px;background:#2b2b2b;"></div>
<svg style="left:49px;top:1059px;" width="16" height="16" viewBox="0 0 16 16"><path fill="#cccccc" fill-rule="evenodd" clip-rule="evenodd" d="M10.072 8.024L5.715 3.667l.618-.62L11 7.716v.618L6.333 13l-.618-.619 4.357-4.357z"/></svg>
<svg style="left:49px;top:1081px;" width="16" height="16" viewBox="0 0 16 16"><path fill="#cccccc" fill-rule="evenodd" clip-rule="evenodd" d="M10.072 8.024L5.715 3.667l.618-.62L11 7.716v.618L6.333 13l-.618-.619 4.357-4.357z"/></svg>
<span id="t31" class="tx" style="left:67px;top:1056.0px;font-size:11px;line-height:22px;color:#cccccc;font-weight:700;transform:scaleX(0.9590);transform-origin:0 50%;">OUTLINE</span>
<span id="t32" class="tx" style="left:67px;top:1078.0px;font-size:11px;line-height:22px;color:#cccccc;font-weight:700;transform:scaleX(0.9777);transform-origin:0 50%;">TIMELINE</span>
<svg style="left:227px;top:13.5px;" width="17" height="16" viewBox="0 0 17 16"><ellipse cx="8.05" cy="8" rx="7.9" ry="4.2" fill="#2196f3"/><text x="8" y="9.700" text-anchor="middle" font-family="Liberation Sans, sans-serif" font-size="6.8" font-weight="700" font-style="italic" fill="#04101c" fill-opacity=".72">php</text></svg>
<span id="t33" class="tx" style="left:249px;top:11.5px;font-size:13px;line-height:22px;color:#9d9d9d;font-weight:400;letter-spacing:0.098px;">single-equipier.php</span>
<svg style="left:399px;top:13.5px;" width="17" height="16" viewBox="0 0 17 16"><ellipse cx="8.05" cy="8" rx="7.9" ry="4.2" fill="#2196f3"/><text x="8" y="9.700" text-anchor="middle" font-family="Liberation Sans, sans-serif" font-size="6.8" font-weight="700" font-style="italic" fill="#04101c" fill-opacity=".72">php</text></svg>
<span id="t34" class="tx" style="left:421px;top:11.5px;font-size:13px;line-height:22px;color:#e2c08d;font-weight:400;letter-spacing:0.153px;">template-equipeOrion.php</span>
<span id="t35" class="tx" style="left:580px;top:11.5px;font-size:12px;line-height:22px;color:#b39a72;font-weight:700;letter-spacing:0.496px;">M</span>
<svg style="left:596px;top:13.5px;" width="16" height="16" viewBox="0 0 16 16"><path fill="none" stroke="#e6e6e6" stroke-width="1.500" d="M4 4l8.300 8.300M12.300 4L4 12.300"/></svg>
<svg style="left:1836px;top:14.5px;" width="16" height="16" viewBox="0 0 16 16"><g fill="none" stroke="#d4d4d4" stroke-width="1.150"><circle cx="3.300" cy="3" r="1.850"/><circle cx="12.500" cy="12.900" r="1.850"/><path d="M3.300 4.900v5.300a2.700 2.700 0 0 0 2.700 2.700h3M7.300 10.800l2.100 2.100-2.100 2.100M12.500 11V5.700a2.700 2.700 0 0 0-2.700-2.700H7M8.700 0.900L6.600 3l2.100 2.100"/></g></svg>
<svg style="left:1861.6px;top:13.5px;" width="16" height="16" viewBox="0 0 16 16"><path fill="#d4d4d4" fill-rule="evenodd" clip-rule="evenodd" d="M14 1H3L2 2v11l1 1h11l1-1V2l-1-1zM8 13H3V2h5v11zm6 0H9V2h5v11z"/></svg>
<svg style="left:1888px;top:14px;" width="16" height="16" viewBox="0 0 16 16"><path fill="#cccccc" fill-rule="evenodd" clip-rule="evenodd" d="M4 8a1 1 0 1 1-2 0 1 1 0 0 1 2 0zm5 0a1 1 0 1 1-2 0 1 1 0 0 1 2 0zm5 0a1 1 0 1 1-2 0 1 1 0 0 1 2 0z"/></svg>
<span id="t36" class="tx" style="left:233px;top:40.0px;font-size:13px;line-height:22px;color:#a9a9a9;font-weight:400;letter-spacing:0.216px;">orion</span>
<svg style="left:264px;top:42px;" width="16" height="16" viewBox="0 0 16 16"><path fill="#a9a9a9" fill-rule="evenodd" clip-rule="evenodd" d="M10.072 8.024L5.715 3.667l.618-.62L11 7.716v.618L6.333 13l-.618-.619 4.357-4.357z"/></svg>
<svg style="left:279px;top:42px;" width="17" height="16" viewBox="0 0 17 16"><ellipse cx="8.05" cy="8" rx="7.9" ry="4.2" fill="#2196f3"/><text x="8" y="9.700" text-anchor="middle" font-family="Liberation Sans, sans-serif" font-size="6.8" font-weight="700" font-style="italic" fill="#04101c" fill-opacity=".72">php</text></svg>
<span id="t37" class="tx" style="left:301px;top:40.0px;font-size:13px;line-height:22px;color:#a9a9a9;font-weight:400;letter-spacing:0.153px;">template-equipeOrion.php</span>
<svg style="left:8.5px;top:1102.5px;" width="16" height="16" viewBox="0 0 16 16"><path fill="#ffffff" fill-rule="evenodd" clip-rule="evenodd" d="M12.904 9.57L8.928 5.596l3.976-3.976-.619-.62L8 5.286v.619l4.285 4.285.62-.618zM3 5.62l4.072 4.07L3 13.763l.619.618L8 10v-.619L3.619 5 3 5.619z"/></svg>
<svg style="left:38.5px;top:1102.8px;" width="14.5" height="14.5" viewBox="0 0 24 24"><path fill="#cccccc" fill-rule="evenodd" clip-rule="evenodd" d="M21.007 8.222A3.738 3.738 0 0 0 15.045 5.2a3.737 3.737 0 0 0 1.156 6.583 2.988 2.988 0 0 1-2.668 1.67h-2.99a4.456 4.456 0 0 0-2.989 1.165V7.4a3.737 3.737 0 1 0-1.494 0v9.117a3.776 3.776 0 1 0 1.816.099 2.99 2.99 0 0 1 2.668-1.667h2.99a4.484 4.484 0 0 0 4.223-3.039 3.736 3.736 0 0 0 3.25-3.687zM4.565 3.738a2.242 2.242 0 1 1 4.484 0 2.242 2.242 0 0 1-4.484 0zm4.484 16.441a2.242 2.242 0 1 1-4.484 0 2.242 2.242 0 0 1 4.484 0zm8.221-9.715a2.242 2.242 0 1 1 0-4.485 2.242 2.242 0 0 1 0 4.485z"/></svg>
<span id="t38" class="tx" style="left:57px;top:1099.5px;font-size:12px;line-height:22px;color:#cccccc;font-weight:400;letter-spacing:-0.037px;">main*</span>
<svg style="left:92.6px;top:1102.5px;" width="16" height="16" viewBox="0 0 16 16"><g fill="none" stroke="#cccccc" stroke-width="1.150"><path d="M2.600 7.200a5.500 5.500 0 0 1 10-2.200M13.400 8.800a5.500 5.500 0 0 1-10 2.200"/><path d="M12.900 1.800v3.400H9.500M3.100 14.200v-3.400h3.400"/></g></svg>
<svg style="left:121.5px;top:1103.5px;" width="14" height="14" viewBox="0 0 16 16"><path fill="#cccccc" fill-rule="evenodd" clip-rule="evenodd" d="M8.6 1c1.6.1 3.1.9 4.2 2 1.3 1.4 2 3.1 2 5.1 0 1.6-.6 3.1-1.6 4.4-1 1.2-2.4 2.1-4 2.4-1.6.3-3.2.1-4.6-.7-1.4-.8-2.5-2-3.1-3.5C.9 9.2.8 7.5 1.3 6c.5-1.6 1.4-2.9 2.8-3.8C5.4 1.3 7 .9 8.6 1zm.5 12.900c1.3-.3 2.5-1 3.4-2.1.8-1.1 1.3-2.4 1.2-3.8 0-1.6-.6-3.2-1.7-4.3-1-1-2.2-1.6-3.6-1.7-1.3-.1-2.7.2-3.800 1-1.100.8-1.900 1.900-2.300 3.300-.4 1.300-.4 2.700.2 4 .6 1.300 1.500 2.300 2.700 3 1.200.7 2.600.9 3.900.6zM7.900 7.500L10.300 5l.7.7-2.400 2.500 2.400 2.500-.7.7-2.400-2.500-2.400 2.500-.7-.7 2.400-2.500-2.400-2.500.7-.7 2.400 2.500z"/></svg>
<span id="t39" class="tx" style="left:139px;top:1099.5px;font-size:12px;line-height:22px;color:#cccccc;font-weight:400;letter-spacing:-0.377px;">0</span>
<svg style="left:148.5px;top:1103.5px;" width="14" height="14" viewBox="0 0 16 16"><path fill="#cccccc" fill-rule="evenodd" clip-rule="evenodd" d="M7.56 1h.88l6.54 12.26-.44.74H1.44L1 13.26 7.56 1zM8 2.28L2.28 13H13.7L8 2.28zM8.625 12v-1h-1.25v1h1.25zm-1.25-2V6h1.25v4h-1.25z"/></svg>
<span id="t40" class="tx" style="left:166.3px;top:1099.5px;font-size:12px;line-height:22px;color:#cccccc;font-weight:400;letter-spacing:-0.377px;">0</span>
<svg style="left:189px;top:1103.5px;" width="14" height="14" viewBox="0 0 16 16"><g fill="none" stroke="#cccccc" stroke-width="1.100"><path d="M4.300 2.500a5 5 0 0 0 0 7M11.700 2.500a5 5 0 0 1 0 7M2.300 1a7.500 7.500 0 0 0 0 10M13.700 1a7.500 7.500 0 0 1 0 10"/><circle cx="8" cy="6" r="1.300"/><path d="M7.400 7.300L4.500 15M8.600 7.300L11.500 15M5.600 12h4.800"/></g></svg>
<span id="t41" class="tx" style="left:205.9px;top:1099.5px;font-size:12px;line-height:22px;color:#cccccc;font-weight:400;letter-spacing:-0.377px;">0</span>
<svg style="left:227.5px;top:1103px;" width="15" height="15" viewBox="0 0 16 16"><path fill="none" stroke="#cccccc" stroke-width="1.250" stroke-linejoin="round" d="M10.300 1.600L4.300 8.600h3L5.600 14.400 12.300 6.600H8.900z"/></svg>
<span id="t42" class="tx" style="left:1511.4px;top:1099.5px;font-size:12px;line-height:22px;color:#cccccc;font-weight:400;letter-spacing:-0.215px;">Ln 53, Col 11</span>
<span id="t43" class="tx" style="left:1595.4px;top:1099.5px;font-size:12px;line-height:22px;color:#cccccc;font-weight:400;letter-spacing:-0.486px;">Spaces: 4</span>
<span id="t44" class="tx" style="left:1660.6px;top:1099.5px;font-size:12px;line-height:22px;color:#cccccc;font-weight:400;letter-spacing:-0.539px;">UTF-8</span>
<span id="t45" class="tx" style="left:1708.2px;top:1099.5px;font-size:12px;line-height:22px;color:#cccccc;font-weight:400;letter-spacing:-1.261px;">CRLF</span>
<span id="t46" class="tx" style="left:1750.3px;top:1099.5px;font-size:12px;line-height:22px;color:#cccccc;font-weight:400;letter-spacing:-0.959px;">PHP</span>
<svg style="left:1788px;top:1103px;" width="14" height="13" viewBox="0 0 14 13"><g fill="none" stroke="#cccccc" stroke-width="1.100"><rect x="0.600" y="0.600" width="12.800" height="11.800" rx="1.200"/><path d="M3.200 3.800l2.600 2.400-2.600 2.400M6.800 9.200h3.600"/></g></svg>
<svg style="left:1818.3px;top:1103.2px;" width="13.2" height="13.2" viewBox="0 0 14 14"><g fill="none" stroke="#cccccc" stroke-width="1.100"><circle cx="7" cy="7" r="6"/><path d="M11.200 2.800L2.800 11.200"/></g></svg>
<span id="t47" class="tx" style="left:1835.5px;top:1099.5px;font-size:12px;line-height:22px;color:#cccccc;font-weight:400;letter-spacing:-0.086px;">Prettier</span>
<svg style="left:1890px;top:1102px;" width="14.6" height="14.6" viewBox="0 0 16 16"><path fill="#cccccc" fill-rule="evenodd" clip-rule="evenodd" d="M13.377 10.573a7.63 7.63 0 0 1-.383-2.38V6.195a5.115 5.115 0 0 0-1.268-3.446 5.138 5.138 0 0 0-3.242-1.722c-.694-.072-1.4 0-2.07.227-.67.215-1.28.574-1.794 1.053a4.923 4.923 0 0 0-1.208 1.675 5.067 5.067 0 0 0-.431 2.022v2.2a7.61 7.61 0 0 1-.383 2.37L2 12.343l.479.658h3.505c0 .526.215 1.04.586 1.412.37.37.885.586 1.412.586.526 0 1.04-.215 1.411-.586s.587-.886.587-1.412h3.505l.478-.658-.586-1.77zm-4.69 3.147a.997.997 0 0 1-.705.299.997.997 0 0 1-.706-.3.997.997 0 0 1-.3-.705h1.999a.939.939 0 0 1-.287.706zm-5.515-1.71l.371-1.114a8.633 8.633 0 0 0 .443-2.691V6.004c0-.563.12-1.113.347-1.616.227-.514.55-.969.969-1.34.419-.382.91-.67 1.436-.837.538-.18 1.1-.24 1.65-.18a4.147 4.147 0 0 1 2.597 1.4 4.133 4.133 0 0 1 1.004 2.776v2.01c0 .909.144 1.818.443 2.691l.371 1.113h-9.63v-.012z"/></svg>
<div style="left:285px;top:1049px;width:1630px;height:19px;background:transparent;box-sizing:border-box;border:2px solid #282828;border-right:0;"></div>
<div style="left:285px;top:137px;width:1px;height:190px;background:#404040;"></div>
<div style="left:285px;top:384px;width:1px;height:646px;background:#404040;"></div>
<div style="left:316px;top:156px;width:1px;height:38px;background:#404040;"></div>
<div style="left:316px;top:232px;width:1px;height:76px;background:#404040;"></div>
<div style="left:316px;top:403px;width:1px;height:608px;background:#404040;"></div>
<div style="left:347px;top:251px;width:1px;height:38px;background:#404040;"></div>
<div style="left:347px;top:422px;width:1px;height:76px;background:#404040;"></div>
<div style="left:347px;top:536px;width:1px;height:456px;background:#404040;"></div>
<div style="left:377px;top:460px;width:1px;height:19px;background:#404040;"></div>
<div style="left:377px;top:555px;width:1px;height:95px;background:#404040;"></div>
<div style="left:377px;top:688px;width:1px;height:285px;background:#404040;"></div>
<div style="left:408px;top:574px;width:1px;height:38px;background:#404040;"></div>
<div style="left:408px;top:707px;width:1px;height:247px;background:#404040;"></div>
<div style="left:439px;top:745px;width:1px;height:19px;background:#404040;"></div>
<div style="left:439px;top:821px;width:1px;height:114px;background:#404040;"></div>
<div style="left:470px;top:878px;width:1px;height:19px;background:#404040;"></div>
<div style="left:1086.0px;top:460px;width:8px;height:18px;background:transparent;box-sizing:border-box;border:1px solid #bd9b03;"></div>
<div class="ln" style="top:61px;color:#6e7681">1</div>
<div class="cl" style="top:61px;left:285.000px"><span style="color:#569cd6">&lt;?php</span><span style="color:#cccccc"> </span><span style="color:#6a9955">/* Template Name: Équipe Orion */</span><span style="color:#cccccc"> </span><span style="color:#569cd6">?&gt;</span></div>
<div class="ln" style="top:80px;color:#6e7681">2</div>
<div class="ln" style="top:99px;color:#6e7681">3</div>
<div class="cl" style="top:99px;left:285.000px"><span style="color:#569cd6">&lt;?php</span><span style="color:#cccccc"> </span><span style="color:#dcdcaa">get_header</span><span style="color:#ffd700">(</span><span style="color:#ffd700">)</span><span style="color:#d4d4d4">;</span><span style="color:#cccccc"> </span><span style="color:#569cd6">?&gt;</span></div>
<div class="ln" style="top:118px;color:#6e7681">4</div>
<div class="cl" style="top:118px;left:285.000px"><span style="color:#808080">&lt;</span><span style="color:#569cd6">section</span><span style="color:#cccccc"> </span><span style="color:#9cdcfe">class</span><span style="color:#cccccc">=</span><span style="color:#ce9178">"equipe"</span><span style="color:#808080">&gt;</span></div>
<div class="ln" style="top:137px;color:#6e7681">5</div>
<div class="cl" style="top:137px;left:315.796px"><span style="color:#808080">&lt;</span><span style="color:#569cd6">div</span><span style="color:#cccccc"> </span><span style="color:#9cdcfe">class</span><span style="color:#cccccc">=</span><span style="color:#ce9178">"hero__media"</span><span style="color:#808080">&gt;</span></div>
<div class="ln" style="top:156px;color:#6e7681">6</div>
<div class="cl" style="top:156px;left:346.592px"><span style="color:#569cd6">&lt;?php</span><span style="color:#cccccc"> </span><span style="color:#dcdcaa">the_post_thumbnail</span><span style="color:#ffd700">(</span><span style="color:#ffd700">)</span><span style="color:#d4d4d4">;</span><span style="color:#cccccc"> </span><span style="color:#569cd6">?&gt;</span></div>
<div class="ln" style="top:175px;color:#6e7681">7</div>
<div class="cl" style="top:175px;left:346.592px"><span style="color:#808080">&lt;</span><span style="color:#569cd6">div</span><span style="color:#cccccc"> </span><span style="color:#9cdcfe">class</span><span style="color:#cccccc">=</span><span style="color:#ce9178">"gradient"</span><span style="color:#808080">&gt;</span><span style="color:#808080">&lt;/</span><span style="color:#569cd6">div</span><span style="color:#808080">&gt;</span></div>
<div class="ln" style="top:194px;color:#6e7681">8</div>
<div class="cl" style="top:194px;left:315.796px"><span style="color:#808080">&lt;/</span><span style="color:#569cd6">div</span><span style="color:#808080">&gt;</span></div>
<div class="ln" style="top:213px;color:#6e7681">9</div>
<div class="cl" style="top:213px;left:315.796px"><span style="color:#808080">&lt;</span><span style="color:#569cd6">div</span><span style="color:#cccccc"> </span><span style="color:#9cdcfe">class</span><span style="color:#cccccc">=</span><span style="color:#ce9178">"wrapper"</span><span style="color:#808080">&gt;</span></div>
<div class="ln" style="top:232px;color:#6e7681">10</div>
<div class="cl" style="top:232px;left:346.592px"><span style="color:#808080">&lt;</span><span style="color:#569cd6">div</span><span style="color:#cccccc"> </span><span style="color:#9cdcfe">class</span><span style="color:#cccccc">=</span><span style="color:#ce9178">"hero__content"</span><span style="color:#808080">&gt;</span></div>
<div class="ln" style="top:251px;color:#6e7681">11</div>
<div class="cl" style="top:251px;left:377.388px"><span style="color:#808080">&lt;</span><span style="color:#569cd6">h1</span><span style="color:#808080">&gt;</span><span style="color:#569cd6">&lt;?php</span><span style="color:#cccccc"> </span><span style="color:#dcdcaa">the_title</span><span style="color:#ffd700">(</span><span style="color:#ffd700">)</span><span style="color:#d4d4d4">;</span><span style="color:#cccccc"> </span><span style="color:#569cd6">?&gt;</span><span style="color:#808080">&lt;/</span><span style="color:#569cd6">h1</span><span style="color:#808080">&gt;</span></div>
<div class="ln" style="top:270px;color:#6e7681">12</div>
<div class="cl" style="top:270px;left:377.388px"><span style="color:#808080">&lt;</span><span style="color:#569cd6">p</span><span style="color:#808080">&gt;</span><span style="color:#569cd6">&lt;?php</span><span style="color:#cccccc"> </span><span style="color:#dcdcaa">the_content</span><span style="color:#ffd700">(</span><span style="color:#ffd700">)</span><span style="color:#d4d4d4">;</span><span style="color:#cccccc"> </span><span style="color:#569cd6">?&gt;</span><span style="color:#808080">&lt;/</span><span style="color:#569cd6">p</span><span style="color:#808080">&gt;</span></div>
<div class="ln" style="top:289px;color:#6e7681">13</div>
<div class="cl" style="top:289px;left:346.592px"><span style="color:#808080">&lt;/</span><span style="color:#569cd6">div</span><span style="color:#808080">&gt;</span></div>
<div class="ln" style="top:308px;color:#6e7681">14</div>
<div class="cl" style="top:308px;left:315.796px"><span style="color:#808080">&lt;/</span><span style="color:#569cd6">div</span><span style="color:#808080">&gt;</span></div>
<div class="ln" style="top:327px;color:#6e7681">15</div>
<div class="cl" style="top:327px;left:285.000px"><span style="color:#808080">&lt;/</span><span style="color:#569cd6">section</span><span style="color:#808080">&gt;</span></div>
<div class="ln" style="top:346px;color:#6e7681">16</div>
<div class="ln" style="top:365px;color:#6e7681">17</div>
<div class="cl" style="top:365px;left:285.000px"><span style="color:#808080">&lt;</span><span style="color:#569cd6">section</span><span style="color:#cccccc"> </span><span style="color:#9cdcfe">class</span><span style="color:#cccccc">=</span><span style="color:#ce9178">"members"</span><span style="color:#808080">&gt;</span></div>
<div class="ln" style="top:384px;color:#6e7681">18</div>
<div class="cl" style="top:384px;left:315.796px"><span style="color:#808080">&lt;</span><span style="color:#569cd6">div</span><span style="color:#cccccc"> </span><span style="color:#9cdcfe">class</span><span style="color:#cccccc">=</span><span style="color:#ce9178">"wrapper"</span><span style="color:#808080">&gt;</span></div>
<div class="ln" style="top:403px;color:#6e7681">19</div>
<div class="cl" style="top:403px;left:346.592px"><span style="color:#808080">&lt;</span><span style="color:#569cd6">div</span><span style="color:#cccccc"> </span><span style="color:#9cdcfe">class</span><span style="color:#cccccc">=</span><span style="color:#ce9178">"intro"</span><span style="color:#808080">&gt;</span></div>
<div class="ln" style="top:422px;color:#6e7681">20</div>
<div class="cl" style="top:422px;left:377.388px"><span style="color:#808080">&lt;</span><span style="color:#569cd6">h2</span><span style="color:#808080">&gt;</span><span style="color:#cccccc">Qui sommes-nous?</span><span style="color:#808080">&lt;/</span><span style="color:#569cd6">h2</span><span style="color:#808080">&gt;</span></div>
<div class="ln" style="top:441px;color:#6e7681">21</div>
<div class="cl" style="top:441px;left:377.388px"><span style="color:#808080">&lt;</span><span style="color:#569cd6">p</span><span style="color:#808080">&gt;</span></div>
<div class="ln" style="top:460px;color:#6e7681">22</div>
<div class="cl" style="top:460px;left:408.184px"><span style="color:#cccccc">Nous sommes ORION, les nouveaux arrivants dans le domaine du transport de luxe. ORION, c’est avant tout le rêve de nos 4 fondateurs que voici:</span></div>
<div class="ln" style="top:479px;color:#6e7681">23</div>
<div class="cl" style="top:479px;left:377.388px"><span style="color:#808080">&lt;/</span><span style="color:#569cd6">p</span><span style="color:#808080">&gt;</span></div>
<div class="ln" style="top:498px;color:#6e7681">24</div>
<div class="cl" style="top:498px;left:346.592px"><span style="color:#808080">&lt;/</span><span style="color:#569cd6">div</span><span style="color:#808080">&gt;</span></div>
<div class="ln" style="top:517px;color:#6e7681">25</div>
<div class="cl" style="top:517px;left:346.592px"><span style="color:#808080">&lt;</span><span style="color:#569cd6">div</span><span style="color:#cccccc"> </span><span style="color:#9cdcfe">class</span><span style="color:#cccccc">=</span><span style="color:#ce9178">"cards"</span><span style="color:#808080">&gt;</span></div>
<div class="ln" style="top:536px;color:#6e7681">26</div>
<div class="cl" style="top:536px;left:377.388px"><span style="color:#569cd6">&lt;?php</span></div>
<div class="ln" style="top:555px;color:#6e7681">27</div>
<div class="cl" style="top:555px;left:408.184px"><span style="color:#9cdcfe">$args</span><span style="color:#d4d4d4"> = </span><span style="color:#dcdcaa">array</span><span style="color:#ffd700">(</span></div>
<div class="ln" style="top:574px;color:#6e7681">28</div>
<div class="cl" style="top:574px;left:438.980px"><span style="color:#ce9178">'post_type'</span><span style="color:#d4d4d4"> =&gt; </span><span style="color:#ce9178">'equipier'</span><span style="color:#d4d4d4">,</span></div>
<div class="ln" style="top:593px;color:#6e7681">29</div>
<div class="cl" style="top:593px;left:438.980px"><span style="color:#ce9178">'post_status'</span><span style="color:#d4d4d4"> =&gt; </span><span style="color:#ce9178">'publish'</span><span style="color:#d4d4d4">,</span></div>
<div class="ln" style="top:612px;color:#6e7681">30</div>
<div class="cl" style="top:612px;left:408.184px"><span style="color:#ffd700">)</span><span style="color:#d4d4d4">;</span></div>
<div class="ln" style="top:631px;color:#6e7681">31</div>
<div class="cl" style="top:631px;left:408.184px"><span style="color:#9cdcfe">$query</span><span style="color:#d4d4d4"> = </span><span style="color:#569cd6">new</span><span style="color:#cccccc"> </span><span style="color:#4ec9b0">WP_Query</span><span style="color:#ffd700">(</span><span style="color:#9cdcfe">$args</span><span style="color:#ffd700">)</span><span style="color:#d4d4d4">;</span></div>
<div class="ln" style="top:650px;color:#6e7681">32</div>
<div class="cl" style="top:650px;left:377.388px"><span style="color:#569cd6">?&gt;</span></div>
<div class="ln" style="top:669px;color:#6e7681">33</div>
<div class="cl" style="top:669px;left:377.388px"><span style="color:#569cd6">&lt;?php</span><span style="color:#cccccc"> </span><span style="color:#c586c0">if</span><span style="color:#cccccc"> </span><span style="color:#ffd700">(</span><span style="color:#9cdcfe">$query</span><span style="color:#d4d4d4">-&gt;</span><span style="color:#dcdcaa">have_posts</span><span style="color:#da70d6">()</span><span style="color:#ffd700">)</span><span style="color:#d4d4d4"> : </span><span style="color:#569cd6">?&gt;</span></div>
<div class="ln" style="top:688px;color:#6e7681">34</div>
<div class="cl" style="top:688px;left:408.184px"><span style="color:#569cd6">&lt;?php</span><span style="color:#cccccc"> </span><span style="color:#c586c0">while</span><span style="color:#cccccc"> </span><span style="color:#ffd700">(</span><span style="color:#9cdcfe">$query</span><span style="color:#d4d4d4">-&gt;</span><span style="color:#dcdcaa">have_posts</span><span style="color:#da70d6">()</span><span style="color:#ffd700">)</span><span style="color:#d4d4d4"> : </span><span style="color:#9cdcfe">$query</span><span style="color:#d4d4d4">-&gt;</span><span style="color:#dcdcaa">the_post</span><span style="color:#ffd700">()</span><span style="color:#d4d4d4">;</span><span style="color:#cccccc"> </span><span style="color:#569cd6">?&gt;</span></div>
<div class="ln" style="top:707px;color:#6e7681">35</div>
<div class="cl" style="top:707px;left:438.980px"><span style="color:#808080">&lt;</span><span style="color:#569cd6">div</span><span style="color:#cccccc"> </span><span style="color:#9cdcfe">class</span><span style="color:#cccccc">=</span><span style="color:#ce9178">"card"</span><span style="color:#808080">&gt;</span></div>
<div class="ln" style="top:726px;color:#6e7681">36</div>
<div class="cl" style="top:726px;left:438.980px"><span style="color:#808080">&lt;</span><span style="color:#569cd6">div</span><span style="color:#cccccc"> </span><span style="color:#9cdcfe">class</span><span style="color:#cccccc">=</span><span style="color:#ce9178">"card__media"</span><span style="color:#808080">&gt;</span></div>
<div class="ln" style="top:745px;color:#6e7681">37</div>
<div class="cl" style="top:745px;left:469.776px"><span style="color:#569cd6">&lt;?php</span><span style="color:#cccccc"> </span><span style="color:#dcdcaa">the_post_thumbnail</span><span style="color:#ffd700">(</span><span style="color:#ffd700">)</span><span style="color:#d4d4d4">;</span><span style="color:#cccccc"> </span><span style="color:#569cd6">?&gt;</span></div>
<div class="ln" style="top:764px;color:#6e7681">38</div>
<div class="cl" style="top:764px;left:438.980px"><span style="color:#808080">&lt;/</span><span style="color:#569cd6">div</span><span style="color:#808080">&gt;</span></div>
<div class="ln" style="top:783px;color:#6e7681">39</div>
<div class="ln" style="top:802px;color:#6e7681">40</div>
<div class="cl" style="top:802px;left:438.980px"><span style="color:#808080">&lt;</span><span style="color:#569cd6">div</span><span style="color:#cccccc"> </span><span style="color:#9cdcfe">class</span><span style="color:#cccccc">=</span><span style="color:#ce9178">"card__content"</span><span style="color:#808080">&gt;</span></div>
<div class="ln" style="top:821px;color:#6e7681">41</div>
<div class="ln" style="top:840px;color:#6e7681">42</div>
<div class="cl" style="top:840px;left:469.776px"><span style="color:#808080">&lt;</span><span style="color:#569cd6">h3</span><span style="color:#808080">&gt;</span><span style="color:#569cd6">&lt;?php</span><span style="color:#cccccc"> </span><span style="color:#dcdcaa">the_title</span><span style="color:#ffd700">(</span><span style="color:#ffd700">)</span><span style="color:#d4d4d4">;</span><span style="color:#cccccc"> </span><span style="color:#569cd6">?&gt;</span><span style="color:#808080">&lt;/</span><span style="color:#569cd6">h3</span><span style="color:#808080">&gt;</span></div>
<div class="ln" style="top:859px;color:#6e7681">43</div>
<div class="cl" style="top:859px;left:469.776px"><span style="color:#569cd6">&lt;?php</span><span style="color:#cccccc"> </span><span style="color:#c586c0">if</span><span style="color:#ffd700">(</span><span style="color:#dcdcaa">get_field</span><span style="color:#da70d6">(</span><span style="color:#ce9178">'role_equipier'</span><span style="color:#da70d6">)</span><span style="color:#ffd700">)</span><span style="color:#d4d4d4"> : </span><span style="color:#569cd6">?&gt;</span></div>
<div class="ln" style="top:878px;color:#6e7681">44</div>
<div class="cl" style="top:878px;left:500.572px"><span style="color:#808080">&lt;</span><span style="color:#569cd6">h4</span><span style="color:#808080">&gt;</span><span style="color:#569cd6">&lt;?php</span><span style="color:#cccccc"> </span><span style="color:#dcdcaa">the_field</span><span style="color:#ffd700">(</span><span style="color:#ce9178">'role_equipier'</span><span style="color:#ffd700">)</span><span style="color:#d4d4d4">;</span><span style="color:#cccccc"> </span><span style="color:#569cd6">?&gt;</span><span style="color:#808080">&lt;/</span><span style="color:#569cd6">h4</span><span style="color:#808080">&gt;</span></div>
<div class="ln" style="top:897px;color:#6e7681">45</div>
<div class="cl" style="top:897px;left:469.776px"><span style="color:#569cd6">&lt;?php</span><span style="color:#cccccc"> </span><span style="color:#c586c0">endif</span><span style="color:#d4d4d4">;</span><span style="color:#cccccc"> </span><span style="color:#569cd6">?&gt;</span></div>
<div class="ln" style="top:916px;color:#6e7681">46</div>
<div class="cl" style="top:916px;left:469.776px"><span style="color:#808080">&lt;</span><span style="color:#569cd6">a</span><span style="color:#cccccc"> </span><span style="color:#9cdcfe">href</span><span style="color:#cccccc">=</span><span style="color:#cccccc">"</span><span style="color:#569cd6">&lt;?php</span><span style="color:#cccccc"> </span><span style="color:#dcdcaa">the_permalink</span><span style="color:#ffd700">(</span><span style="color:#ffd700">)</span><span style="color:#d4d4d4">;</span><span style="color:#cccccc"> </span><span style="color:#569cd6">?&gt;</span><span style="color:#cccccc">"</span><span style="color:#cccccc"> </span><span style="color:#9cdcfe">class</span><span style="color:#cccccc">=</span><span style="color:#ce9178">"btn"</span><span style="color:#808080">&gt;</span><span style="color:#cccccc">Voir plus</span><span style="color:#808080">&lt;/</span><span style="color:#569cd6">a</span><span style="color:#808080">&gt;</span></div>
<div class="ln" style="top:935px;color:#6e7681">47</div>
<div class="cl" style="top:935px;left:438.980px"><span style="color:#808080">&lt;/</span><span style="color:#569cd6">div</span><span style="color:#808080">&gt;</span></div>
<div class="ln" style="top:954px;color:#6e7681">48</div>
<div class="cl" style="top:954px;left:408.184px"><span style="color:#808080">&lt;/</span><span style="color:#569cd6">div</span><span style="color:#808080">&gt;</span></div>
<div class="ln" style="top:973px;color:#6e7681">49</div>
<div class="cl" style="top:973px;left:377.388px"><span style="color:#569cd6">&lt;?php</span><span style="color:#cccccc"> </span><span style="color:#c586c0">endwhile</span><span style="color:#d4d4d4">;</span><span style="color:#cccccc"> </span><span style="color:#569cd6">?&gt;</span></div>
<div class="ln" style="top:992px;color:#6e7681">50</div>
<div class="cl" style="top:992px;left:346.592px"><span style="color:#569cd6">&lt;?php</span><span style="color:#cccccc"> </span><span style="color:#c586c0">endif</span><span style="color:#d4d4d4">;</span><span style="color:#cccccc"> </span><span style="color:#569cd6">?&gt;</span></div>
<div class="ln" style="top:1011px;color:#6e7681">51</div>
<div class="cl" style="top:1011px;left:315.796px"><span style="color:#808080">&lt;/</span><span style="color:#569cd6">div</span><span style="color:#808080">&gt;</span></div>
<div class="ln" style="top:1030px;color:#6e7681">52</div>
<div class="cl" style="top:1030px;left:285.000px"><span style="color:#808080">&lt;/</span><span style="color:#569cd6">div</span><span style="color:#808080">&gt;</span></div>
<div class="ln" style="top:1049px;color:#cccccc">53</div>
<div class="cl" style="top:1049px;left:285.000px"><span style="color:#808080">&lt;/</span><span style="color:#569cd6">section</span><span style="color:#808080">&gt;</span></div>
<div class="ln" style="top:1068px;color:#6e7681">54</div>
<div class="cl" style="top:1068px;left:285.000px"><span style="color:#569cd6">&lt;?php</span><span style="color:#cccccc"> </span><span style="color:#dcdcaa">get_footer</span><span style="color:#ffd700">(</span><span style="color:#ffd700">)</span><span style="color:#d4d4d4">;</span><span style="color:#cccccc"> </span><span style="color:#569cd6">?&gt;</span></div>
<svg style="left:263.6px;top:113.8px;" width="4.5" height="8.4" viewBox="0 0 5 9"><path fill="#f4504b" d="M0 0l5 4.500-5 4.500z"/></svg>
<svg style="left:263.6px;top:1063.8px;" width="4.5" height="8.4" viewBox="0 0 5 9"><path fill="#f4504b" d="M0 0l5 4.500-5 4.500z"/></svg>
<div style="left:1905px;top:61px;width:1px;height:1038px;background:#131313;"></div>
<div style="left:1905px;top:61px;width:10px;height:526px;background:#434343;"></div>
<div style="left:1906px;top:80px;width:4px;height:9px;background:#9b5552;"></div>
<div style="left:1906px;top:561px;width:9px;height:2px;background:#909090;"></div>
<div style="left:1906px;top:563px;width:4px;height:9px;background:#9b5552;"></div>
</div></body></html>
